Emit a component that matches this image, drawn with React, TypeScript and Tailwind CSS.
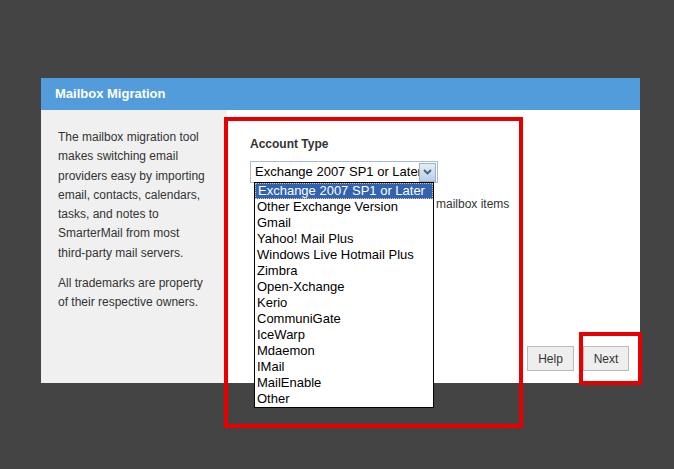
const accountTypes = [
    'Exchange 2007 SP1 or Later',
    'Other Exchange Version',
    'Gmail',
    'Yahoo! Mail Plus',
    'Windows Live Hotmail Plus',
    'Zimbra',
    'Open-Xchange',
    'Kerio',
    'CommuniGate',
    'IceWarp',
    'Mdaemon',
    'IMail',
    'MailEnable',
    'Other'
];

export default function App() {
    return (
        <div className="relative h-[469px] w-full overflow-hidden bg-[#444444] pt-[78px] pl-[41px] font-['Liberation_Sans',Arial,sans-serif]">
            <div className="flex w-[599px] flex-col">
                <div className="flex h-[32px] items-center bg-[#529cdc] pl-[14px] text-[13px] font-bold text-white">
                    Mailbox Migration
                </div>
                <div className="flex h-[273px]">
                    <div className="w-[186px] bg-[#f0f0f0] pt-[18px] pl-[17px] text-[12px] leading-[19.3px] text-[#333333]">
                        <p>
                            The mailbox migration tool<br />
                            makes switching email<br />
                            providers easy by importing<br />
                            email, contacts, calendars,<br />
                            tasks, and notes to<br />
                            SmarterMail from most<br />
                            third-party mail servers.
                        </p>
                        <p className="mt-[11px]">
                            All trademarks are property<br />
                            of their respective owners.
                        </p>
                    </div>
                    <div className="relative flex flex-1 flex-col bg-white pl-[23px] pt-[27px] text-[#333333]">
                        <div className="text-[12px] font-bold leading-[15px]">Account Type</div>
                        <div className="mt-[9px] flex h-[22px] w-[188px] items-center border border-[#a9bccd] bg-white pl-[4px] pr-[1px]">
                            <span className="flex-1 overflow-hidden whitespace-nowrap text-[13px] text-black">Exchange 2007 SP1 or Later</span>
                            <span className="flex h-[19px] w-[17px] items-center justify-center border border-[#98b1cc] bg-gradient-to-b from-[#e3edf8] to-[#b8cfe9]">
                                <svg width="9" height="6" viewBox="0 0 9 6">
                                    <path d="M1 1 L4.5 4.5 L8 1" fill="none" stroke="#4a5d78" strokeWidth="1.8" />
                                </svg>
                            </span>
                        </div>
                        <div className="mt-[14px] pl-[186px] text-[12px] leading-[14px]">mailbox items</div>
                        <div className="mt-auto flex justify-end gap-[9px] pr-[11px] pb-[12px]">
                            <button className="h-[25px] w-[47px] border border-[#bbbbbb] bg-[#eeeeee] text-[12px] text-[#333333]">Help</button>
                            <button className="h-[25px] w-[46px] border border-[#bbbbbb] bg-[#eeeeee] text-[12px] text-[#333333]">Next</button>
                        </div>
                    </div>
                </div>
            </div>

            <ul className="absolute left-[254px] top-[182px] w-[180px] border border-black bg-white text-[13px] leading-[16px] text-black">
                {accountTypes.map((t, i) => (
                    <li
                        key={t}
                        className={`whitespace-nowrap pl-[2px] ${i === 0 ? 'border border-dotted border-[#f0c080] bg-[#3163b0] pl-[1px] leading-[14px] text-white' : ''}`}
                    >
                        {t}
                    </li>
                ))}
            </ul>

            <div className="pointer-events-none absolute left-[224px] top-[117px] h-[311px] w-[299px] border-[4px] border-[#e60000]" />
            <div className="pointer-events-none absolute left-[579px] top-[332px] h-[53px] w-[63px] border-[4px] border-[#e60000]" />
        </div>
    );
}
